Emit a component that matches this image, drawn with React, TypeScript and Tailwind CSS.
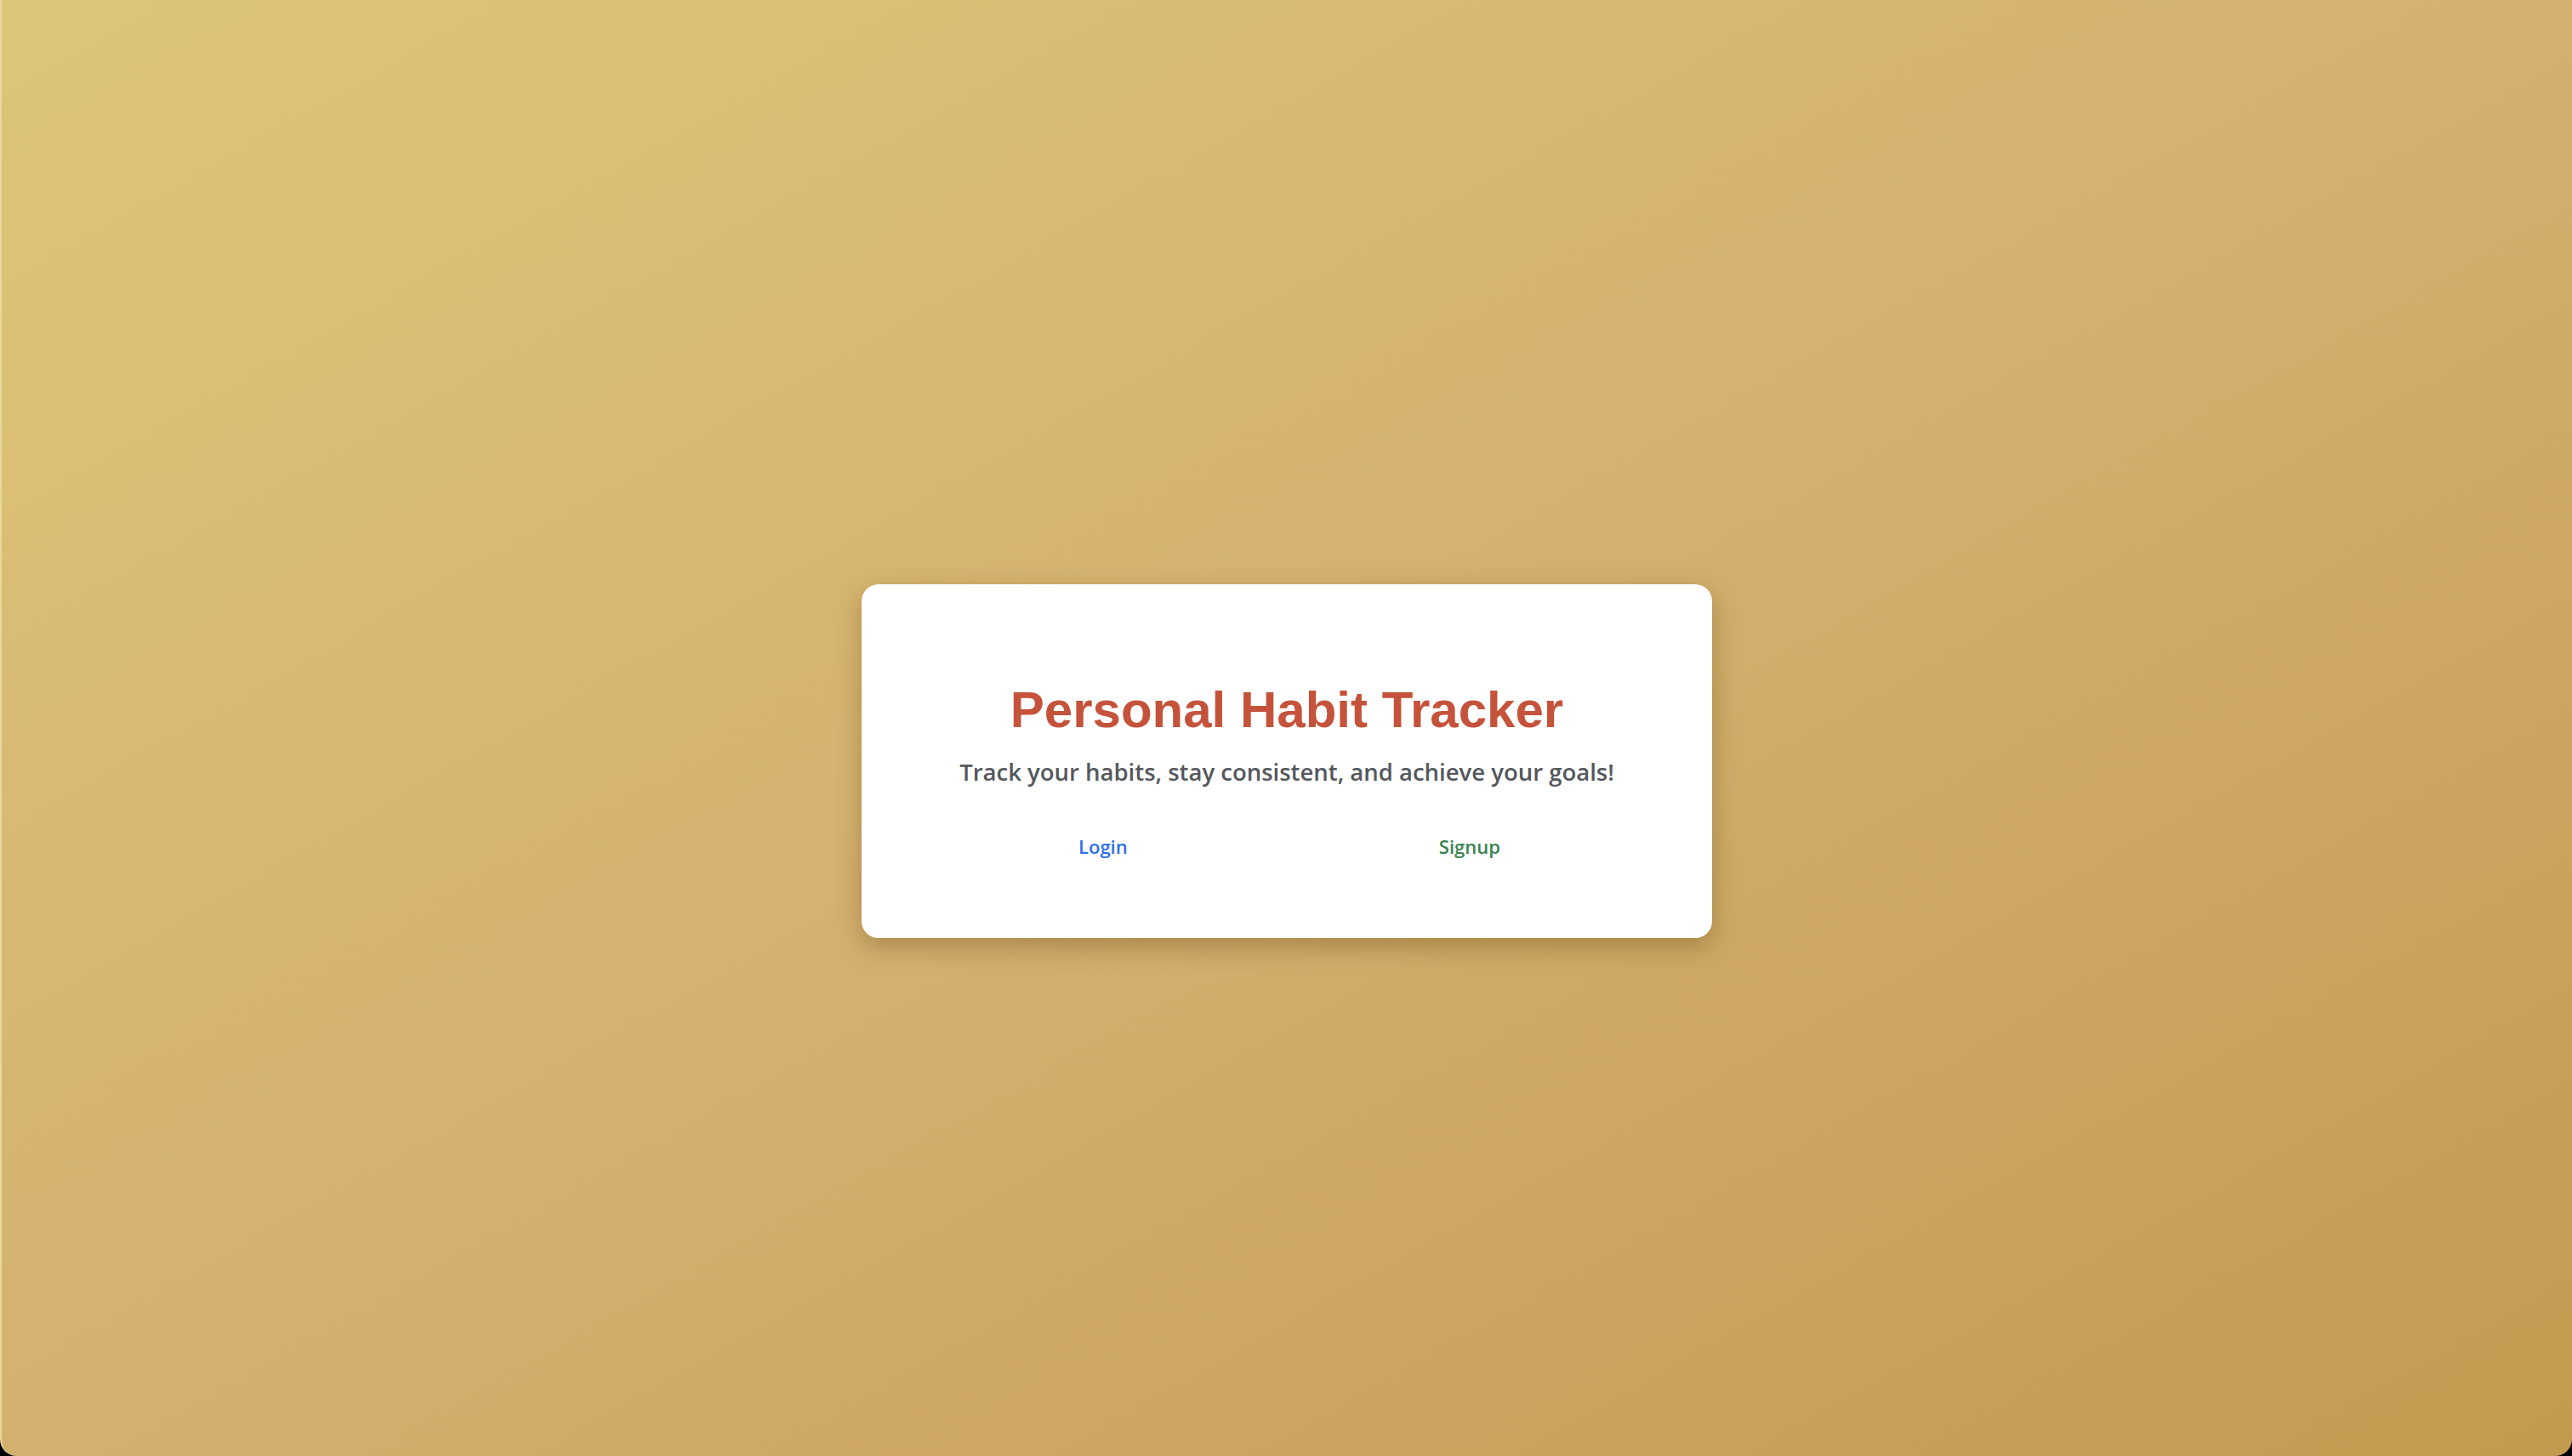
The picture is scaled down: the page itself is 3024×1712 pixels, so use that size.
export default function App() {
  return (
    <div className="w-[3024px] h-[1712px] bg-black">
      <div className="w-full h-full rounded-b-[20px] border-l-2 border-[#e9d9a0] bg-gradient-to-br from-[#ddc677] via-[#d4b06f] to-[#c29a4f] flex items-center justify-center pt-[78px]">
        <div className="w-[1000px] h-[416px] bg-white rounded-[20px] shadow-[0_10px_30px_rgba(90,60,10,0.35)] flex flex-col items-center pt-[118px] px-[69px]">
          <h1 className="text-[60px] leading-[60px] font-bold text-[#c5533b] font-['Liberation_Sans',Arial,sans-serif]">
            Personal Habit Tracker
          </h1>
          <p className="mt-[25px] text-[27.5px] leading-[36px] font-semibold text-[#54585d] font-['Open_Sans',sans-serif]">
            Track your habits, stay consistent, and achieve your goals!
          </p>
          <div className="mt-[53px] w-full flex justify-around font-['Open_Sans',sans-serif] text-[22px] font-semibold">
            <button className="text-[#2f6fe9] translate-x-[3px]">Login</button>
            <button className="text-[#3a8352] translate-x-[3px]">Signup</button>
          </div>
        </div>
      </div>
    </div>
  )
}
